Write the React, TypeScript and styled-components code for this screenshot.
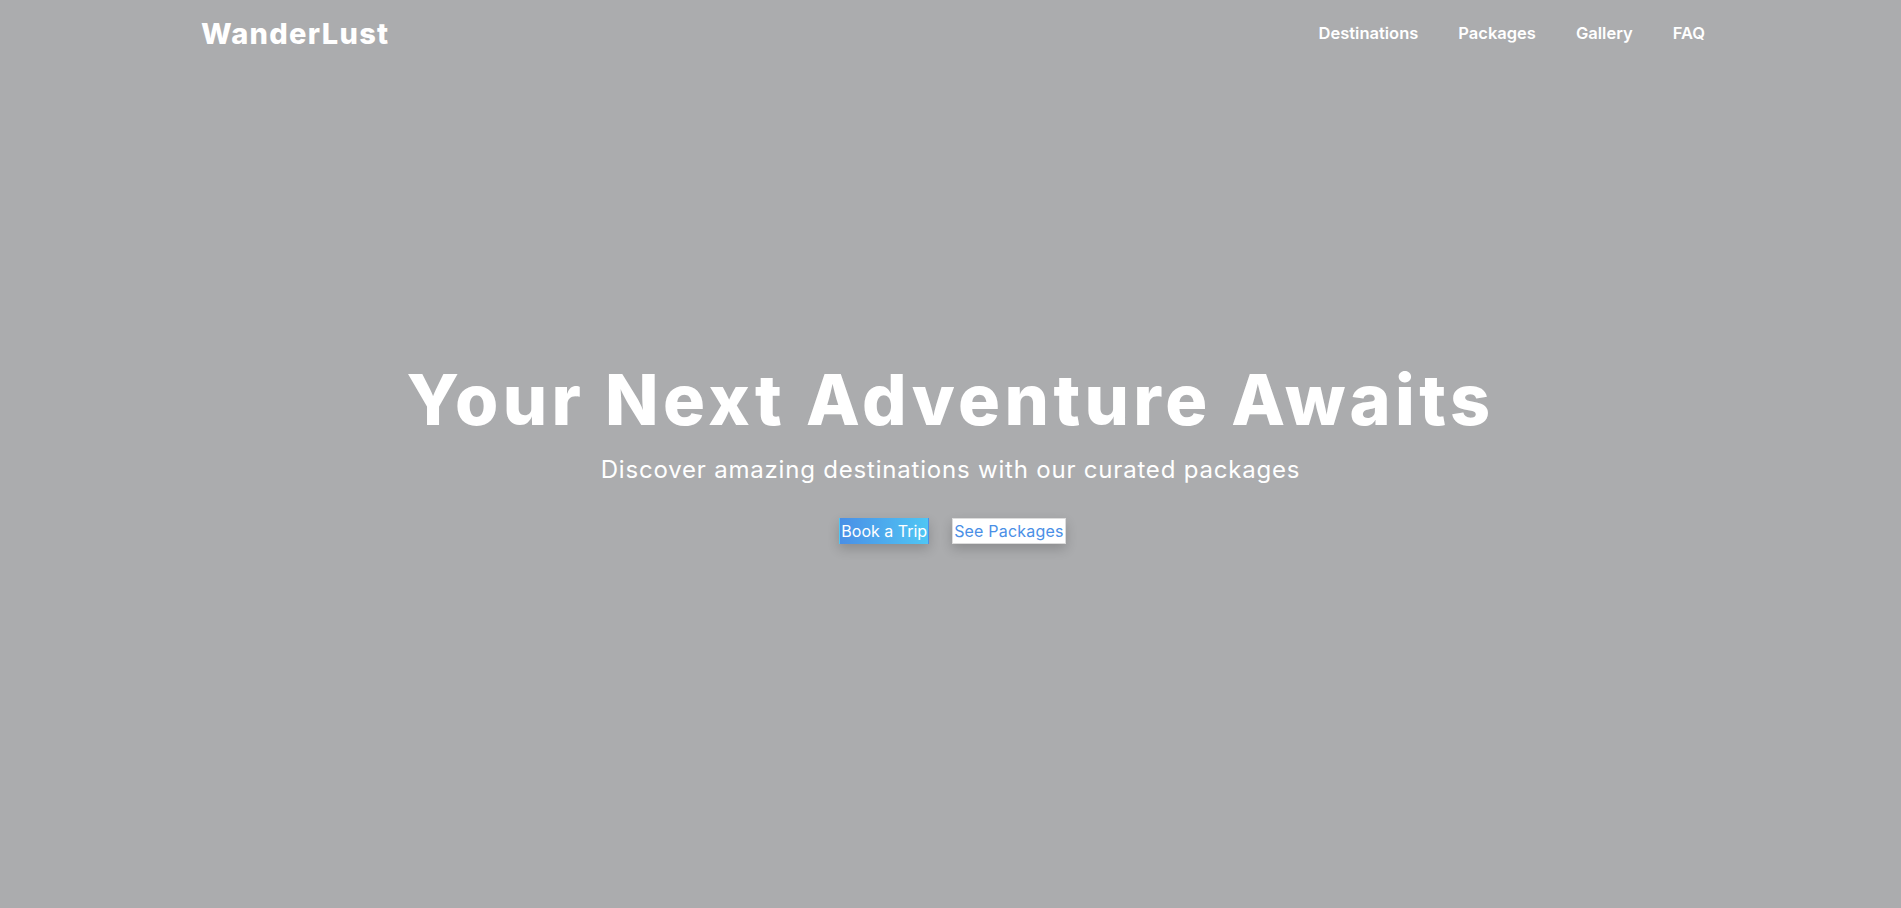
import React from "react";
import styled, { createGlobalStyle } from "styled-components";

const Global = createGlobalStyle`
  * { box-sizing: border-box; }
  html, body { margin: 0; padding: 0; }
  body {
    background: #abacae;
    font-family: "Inter", "Noto Sans", sans-serif;
    color: #fff;
  }
`;

const Page = styled.div`
  position: relative;
  min-height: 100vh;
  background: #abacae;
`;

const Header = styled.header`
  position: absolute;
  top: 0;
  left: 0;
  right: 0;
  height: 68px;
  padding: 0 196px 0 201px;
  display: flex;
  align-items: center;
  justify-content: space-between;
`;

const Logo = styled.div`
  font-size: 29px;
  font-weight: 800;
  line-height: 1.2;
  letter-spacing: 1.3px;
`;

const Nav = styled.nav`
  display: flex;
  gap: 40px;
`;

const NavLink = styled.a`
  color: #fff;
  text-decoration: none;
  font-size: 16.5px;
  font-weight: 600;
  line-height: 1.2;
`;

const Hero = styled.main`
  height: 100vh;
  display: flex;
  flex-direction: column;
  align-items: center;
  justify-content: center;
  text-align: center;
`;

const Title = styled.h1`
  margin: 0 0 21px;
  font-size: 70px;
  line-height: 70px;
  font-weight: 800;
  letter-spacing: 4.4px;
`;

const Subtitle = styled.p`
  margin: 0 0 34px;
  font-size: 24px;
  line-height: 28px;
  font-weight: 400;
  letter-spacing: 0.8px;
`;

const Actions = styled.div`
  display: flex;
  gap: 23px;
  padding-left: 4px;
`;

const Button = styled.button<{ $variant: "primary" | "secondary" }>`
  height: 26px;
  padding: 0 1px;
  font-family: "Inter", "Noto Sans", sans-serif;
  font-size: 16px;
  line-height: 24px;
  font-weight: 400;
  letter-spacing: ${(p) => (p.$variant === "primary" ? "0" : "0.2px")};
  cursor: pointer;
  border: 1px solid ${(p) => (p.$variant === "primary" ? "transparent" : "#dcdcdc")};
  background: ${(p) =>
    p.$variant === "primary"
      ? "linear-gradient(90deg, #4a8fe6 0%, #4fc6f4 100%)"
      : "#ffffff"};
  color: ${(p) => (p.$variant === "primary" ? "#ffffff" : "#4a8fe6")};
  box-shadow: 0 5px 12px rgba(0, 0, 0, 0.18);
`;

export default function App() {
  return (
    <>
      <Global />
      <Page>
        <Header>
          <Logo>WanderLust</Logo>
          <Nav>
            <NavLink href="#">Destinations</NavLink>
            <NavLink href="#">Packages</NavLink>
            <NavLink href="#">Gallery</NavLink>
            <NavLink href="#">FAQ</NavLink>
          </Nav>
        </Header>
        <Hero>
          <Title>Your Next Adventure Awaits</Title>
          <Subtitle>Discover amazing destinations with our curated packages</Subtitle>
          <Actions>
            <Button $variant="primary">Book a Trip</Button>
            <Button $variant="secondary">See Packages</Button>
          </Actions>
        </Hero>
      </Page>
    </>
  );
}
